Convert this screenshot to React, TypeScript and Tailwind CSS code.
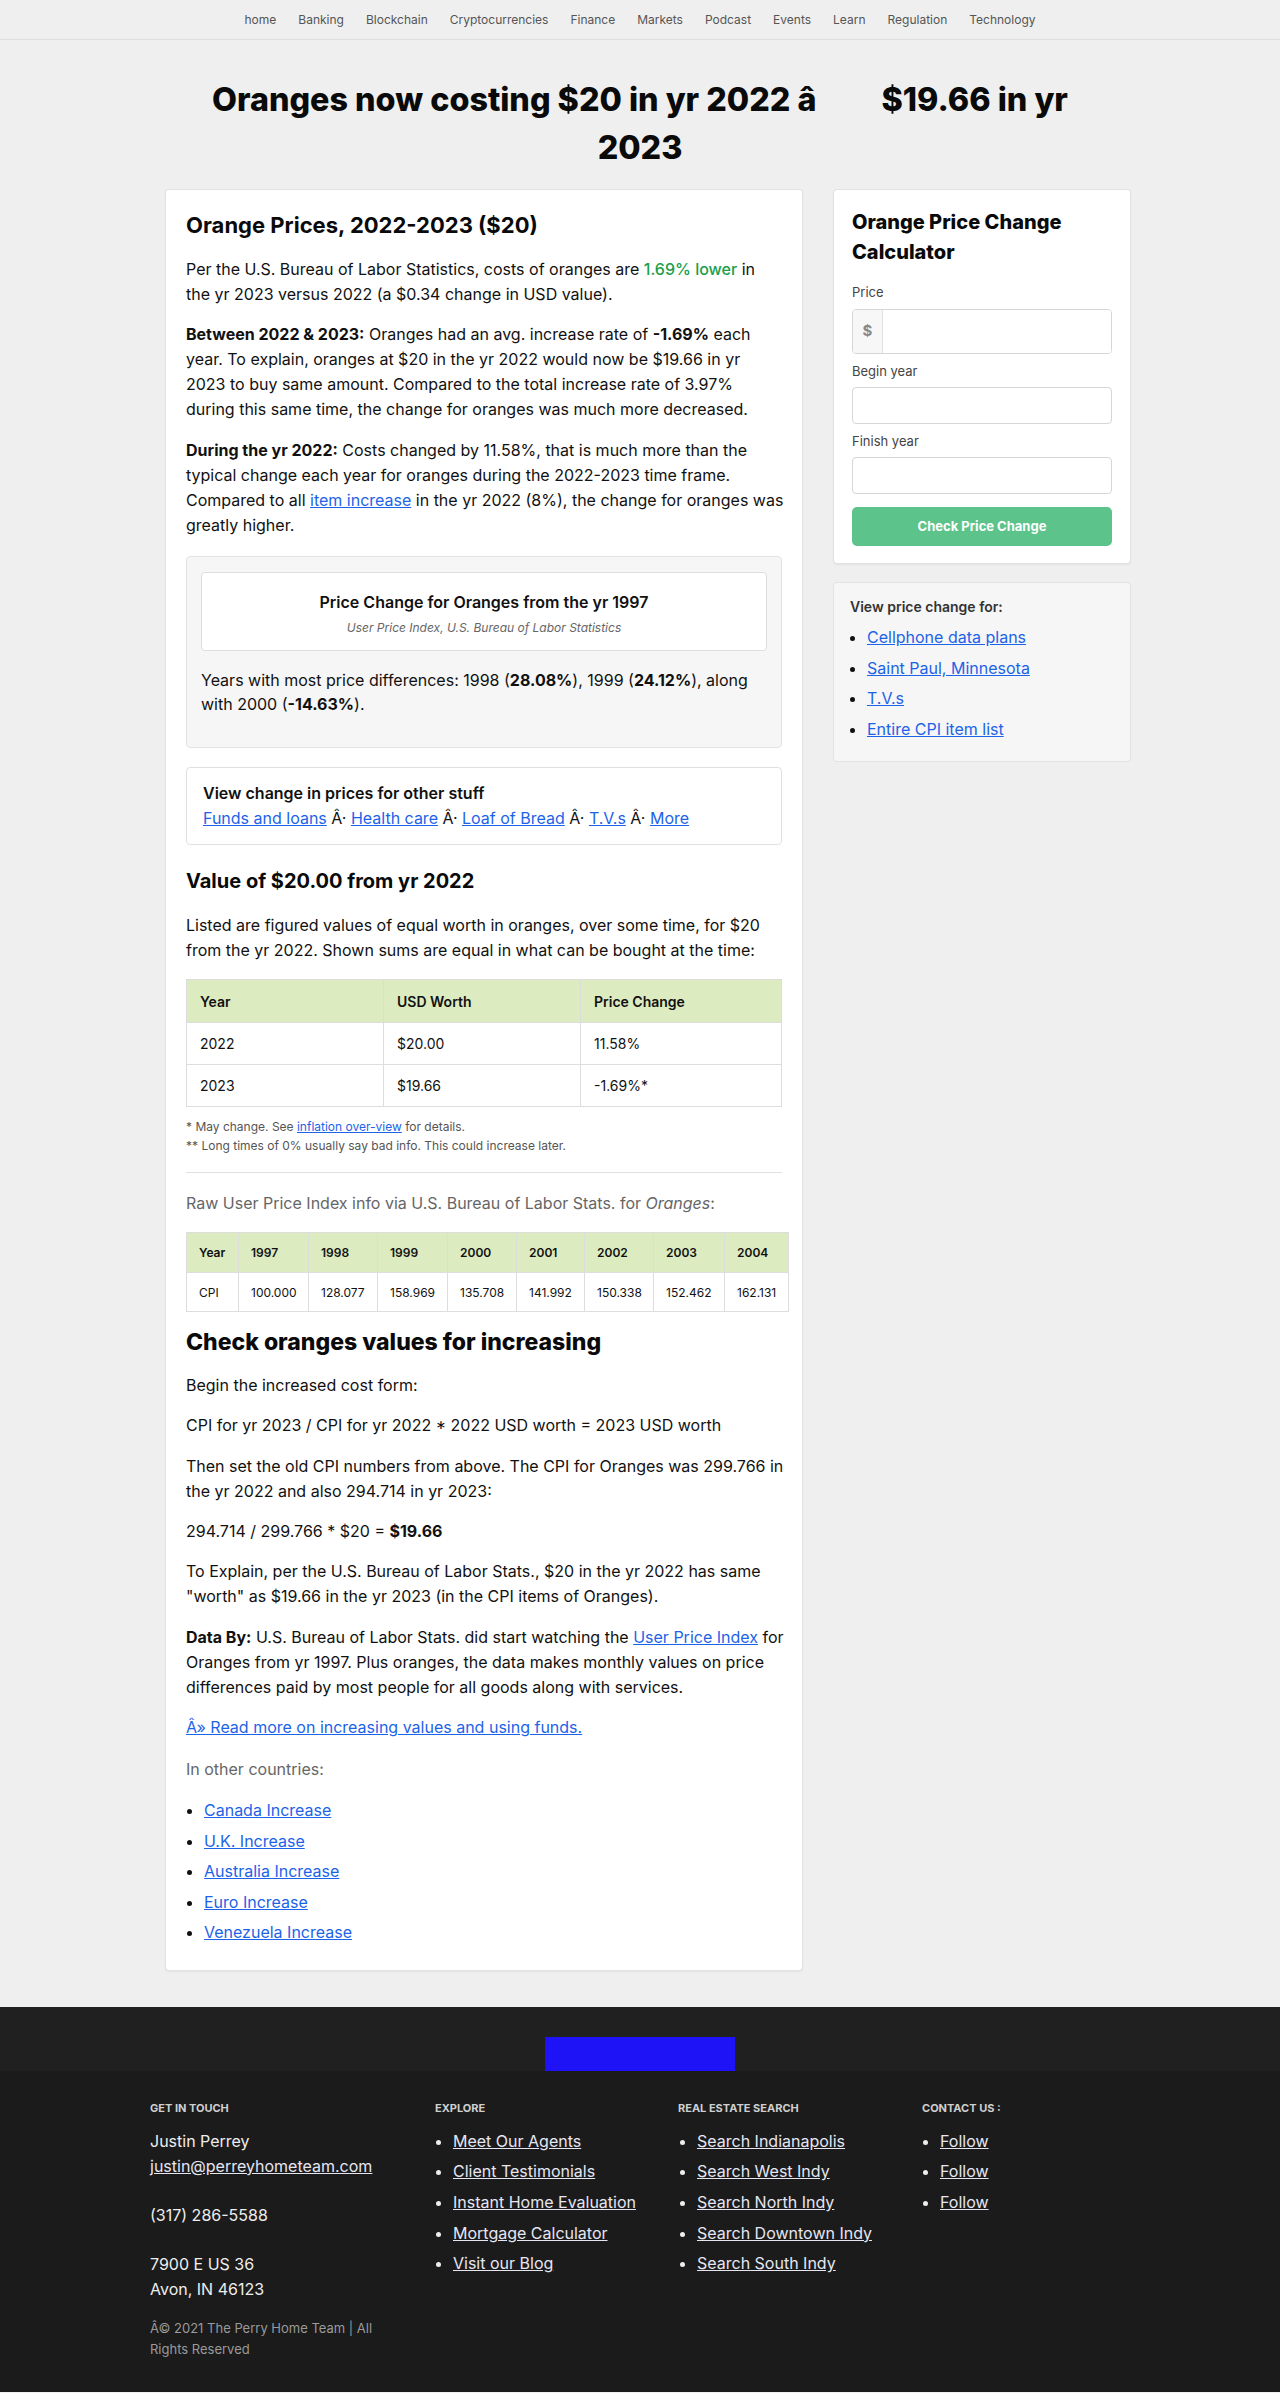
import React from 'react';

const navItems = ['home', 'Banking', 'Blockchain', 'Cryptocurrencies', 'Finance', 'Markets', 'Podcast', 'Events', 'Learn', 'Regulation', 'Technology'];

const cpiYears = ['1997', '1998', '1999', '2000', '2001', '2002', '2003', '2004'];
const cpiValues = ['100.000', '128.077', '158.969', '135.708', '141.992', '150.338', '152.462', '162.131'];
const cpiWidths = ['w-[70px]', 'w-[69px]', 'w-[70px]', 'w-[69px]', 'w-[68px]', 'w-[69px]', 'w-[71px]', 'w-[64px]'];

const countries = ['Canada Increase', 'U.K. Increase', 'Australia Increase', 'Euro Increase', 'Venezuela Increase'];
const sideLinks = ['Cellphone data plans', 'Saint Paul, Minnesota', 'T.V.s', 'Entire CPI item list'];
const explore = ['Meet Our Agents', 'Client Testimonials', 'Instant Home Evaluation', 'Mortgage Calculator', 'Visit our Blog'];
const search = ['Search Indianapolis', 'Search West Indy', 'Search North Indy', 'Search Downtown Indy', 'Search South Indy'];

const link = 'text-[#1d63e8] underline';

function Nav() {
  return (
    <nav className="h-10 border-b border-[#dedede] flex items-center justify-center gap-[22px] text-[12px] text-[#555]">
      {navItems.map((item) => (
        <a key={item} href="#">{item}</a>
      ))}
    </nav>
  );
}

function ValueTable() {
  const rows = [
    ['2022', '$20.00', '11.58%'],
    ['2023', '$19.66', '-1.69%*'],
  ];
  return (
    <table className="w-full border-collapse text-[14px] table-fixed">
      <thead>
        <tr>
          <th className="w-[197px] h-[43px] border border-[#dddddd] bg-[#ddebc0] px-[13px] text-left font-semibold">Year</th>
          <th className="w-[197px] h-[43px] border border-[#dddddd] bg-[#ddebc0] px-[13px] text-left font-semibold">USD Worth</th>
          <th className="h-[43px] border border-[#dddddd] bg-[#ddebc0] px-[13px] text-left font-semibold">Price Change</th>
        </tr>
      </thead>
      <tbody>
        {rows.map((r) => (
          <tr key={r[0]}>
            {r.map((c, i) => (
              <td key={i} className="h-[42px] border border-[#dddddd] px-[13px]">{c}</td>
            ))}
          </tr>
        ))}
      </tbody>
    </table>
  );
}

function CpiTable() {
  return (
    <table className="w-[602px] border-collapse table-fixed text-[12px]">
      <thead>
        <tr>
          <th className="w-[52px] h-[40px] border border-[#dddddd] bg-[#ddebc0] px-[12px] text-left font-semibold">Year</th>
          {cpiYears.map((y, i) => (
            <th key={y} className={`${cpiWidths[i]} h-[40px] border border-[#dddddd] bg-[#ddebc0] px-[12px] text-left font-semibold`}>{y}</th>
          ))}
        </tr>
      </thead>
      <tbody>
        <tr>
          <td className="h-[39px] border border-[#dddddd] px-[12px]">CPI</td>
          {cpiValues.map((v) => (
            <td key={v} className="h-[39px] border border-[#dddddd] px-[12px]">{v}</td>
          ))}
        </tr>
      </tbody>
    </table>
  );
}

function MainCard() {
  return (
    <article className="w-[638px] bg-white border border-[#e2e2e2] rounded-[4px] shadow-[0_1px_2px_rgba(0,0,0,0.06)] px-5 pt-[19px] pb-[19px] text-[16px] leading-[25px] text-[#111]">
      <h2 className="text-[22px] leading-[32px] font-bold mb-4 text-[#0a0a0a]">Orange Prices, 2022-2023 ($20)</h2>
      <p className="mb-[15px]">
        Per the U.S. Bureau of Labor Statistics, costs of oranges are <span className="text-[#18a04a] font-medium">1.69% lower</span> in the yr 2023 versus 2022 (a $0.34 change in USD value).
      </p>
      <p className="mb-4">
        <b>Between 2022 &amp; 2023:</b> Oranges had an avg. increase rate of <b>-1.69%</b> each year. To explain, oranges at $20 in the yr 2022 would now be $19.66 in yr 2023 to buy same amount. Compared to the total increase rate of 3.97% during this same time, the change for oranges was much more decreased.
      </p>
      <p className="mb-[18px] -mr-1">
        <b>During the yr 2022:</b> Costs changed by 11.58%, that is much more than the typical change each year for oranges during the 2022-2023 time frame. Compared to all <a href="#" className={link}>item increase</a> in the yr 2022 (8%), the change for oranges was greatly higher.
      </p>

      <div className="bg-[#f6f6f6] border border-[#e3e3e3] rounded-[4px] px-[14px] pt-[15px] pb-[15px] mb-[19px]">
        <div className="bg-white border border-[#dddddd] rounded-[4px] pt-[17px] pb-[13px] text-center">
          <div className="text-[16px] leading-[24px] font-semibold">Price Change for Oranges from the yr 1997</div>
          <div className="mt-[5px] text-[12px] leading-[18px] italic text-[#666]">User Price Index, U.S. Bureau of Labor Statistics</div>
        </div>
        <p className="mt-[17px] mb-4 leading-[24px]">
          Years with most price differences: 1998 (<b>28.08%</b>), 1999 (<b>24.12%</b>), along with 2000 (<b>-14.63%</b>).
        </p>
      </div>

      <div className="border border-[#e0e0e0] rounded-[4px] px-4 py-[13px]">
        <div className="font-semibold">View change in prices for other stuff</div>
        <div>
          <a href="#" className={link}>Funds and loans</a> Â· <a href="#" className={link}>Health care</a> Â· <a href="#" className={link}>Loaf of Bread</a> Â· <a href="#" className={link}>T.V.s</a> Â· <a href="#" className={link}>More</a>
        </div>
      </div>

      <h3 className="mt-[22px] mb-[18px] text-[20px] leading-[28px] font-bold text-[#0a0a0a]">Value of $20.00 from yr 2022</h3>
      <p className="mb-[16px]">
        Listed are figured values of equal worth in oranges, over some time, for $20 from the yr 2022. Shown sums are equal in what can be bought at the time:
      </p>

      <ValueTable />

      <div className="mt-[10px] text-[12px] leading-[19px] text-[#555]">
        <div>* May change. See <a href="#" className={link}>inflation over-view</a> for details.</div>
        <div>** Long times of 0% usually say bad info. This could increase later.</div>
      </div>

      <hr className="mt-[17px] mb-[18px] border-t border-[#e0e0e0]" />

      <p className="mb-[16px] text-[#666]">
        Raw User Price Index info via U.S. Bureau of Labor Stats. for <i>Oranges</i>:
      </p>

      <CpiTable />

      <h3 className="mt-[15px] mb-[16px] text-[23px] leading-[30px] font-extrabold text-[#0a0a0a]">Check oranges values for increasing</h3>
      <p className="mb-[15px]">Begin the increased cost form:</p>
      <p className="mb-[16px]">CPI for yr 2023 / CPI for yr 2022 * 2022 USD worth = 2023 USD worth</p>
      <p className="mb-[15px] -mr-1">Then set the old CPI numbers from above. The CPI for Oranges was 299.766 in the yr 2022 and also 294.714 in yr 2023:</p>
      <p className="mb-[15px]">294.714 / 299.766 * $20 = <b>$19.66</b></p>
      <p className="mb-[16px]">To Explain, per the U.S. Bureau of Labor Stats., $20 in the yr 2022 has same "worth" as $19.66 in the yr 2023 (in the CPI items of Oranges).</p>
      <p className="mb-[15px] -mr-1">
        <b>Data By:</b> U.S. Bureau of Labor Stats. did start watching the <a href="#" className={link}>User Price Index</a> for Oranges from yr 1997. Plus oranges, the data makes monthly values on price differences paid by most people for all goods along with services.
      </p>
      <p className="mb-[17px]"><a href="#" className={link}>Â» Read more on increasing values and using funds.</a></p>
      <p className="mb-4 text-[#666]">In other countries:</p>
      <ul className="list-disc pl-[18px] mb-[3px]">
        {countries.map((c) => (
          <li key={c} className="mb-[5.5px]"><a href="#" className={link}>{c}</a></li>
        ))}
      </ul>
    </article>
  );
}

function Sidebar() {
  const input = 'h-[37px] w-full border border-[#d6d6d6] rounded-[4px] bg-white';
  return (
    <aside className="w-[298px] flex flex-col gap-[18px]">
      <div className="bg-white border border-[#e2e2e2] rounded-[4px] shadow-[0_1px_2px_rgba(0,0,0,0.06)] px-[18px] pt-[17px] pb-[17px]">
        <h3 className="text-[20px] leading-[30px] font-extrabold text-[#0a0a0a]">Orange Price Change Calculator</h3>
        <label className="block mt-4 mb-2 text-[13px] leading-[18px] text-[#444]">Price</label>
        <div className="flex h-[45px] border border-[#d6d6d6] rounded-[4px] overflow-hidden">
          <span className="w-[30px] flex items-center justify-center bg-[#f7f7f7] border-r border-[#e0e0e0] text-[15px] font-bold text-[#888]">$</span>
          <span className="flex-1 bg-white" />
        </div>
        <label className="block mt-2 mb-[7px] text-[13px] leading-[18px] text-[#444]">Begin year</label>
        <div className={input} />
        <label className="block mt-2 mb-[7px] text-[13px] leading-[18px] text-[#444]">Finish year</label>
        <div className={input} />
        <button className="mt-[13px] w-full h-[39px] rounded-[5px] bg-[#5cc38a] text-white text-[13px] font-bold">Check Price Change</button>
      </div>
      <div className="bg-[#f6f6f6] border border-[#e2e2e2] rounded-[4px] px-4 pt-[14px] pb-[19px]">
        <div className="text-[14px] leading-[20px] font-semibold text-[#333]">View price change for:</div>
        <ul className="list-disc pl-[17px] mt-[8px] text-[16px] leading-[25px]">
          {sideLinks.map((l) => (
            <li key={l} className="mb-[5.7px] last:mb-0"><a href="#" className={link}>{l}</a></li>
          ))}
        </ul>
      </div>
    </aside>
  );
}

function Footer() {
  const fl = 'text-[#e6e6f2] underline';
  return (
    <footer className="mt-[36px]">
      <div className="bg-[#202020] h-[64px] flex justify-center items-end">
        <div className="w-[190px] h-[34px] bg-[#1e12f7]" />
      </div>
      <div className="bg-[#1b1b1b] pt-[30px] pb-[32px]">
        <div className="mx-auto w-[980px] flex text-[16px] leading-[25px] text-[#eeeeee]">
          <div className="w-[285px]">
            <h4 className="text-[11px] leading-[14px] font-bold uppercase text-[#cfcfcf] mb-[14px]">Get in touch</h4>
            <div className="w-[255px]">
              <p>Justin Perrey</p>
              <p><a href="#" className={fl}>justin@perreyhometeam.com</a></p>
              <p className="mt-[24px]">(317) 286-5588</p>
              <p className="mt-[24px]">7900 E US 36</p>
              <p>Avon, IN 46123</p>
              <p className="mt-[16px] text-[13px] leading-[21px] text-[#9a9a9a]">Â© 2021 The Perry Home Team | All Rights Reserved</p>
            </div>
          </div>
          <div className="w-[243px]">
            <h4 className="text-[11px] leading-[14px] font-bold uppercase text-[#cfcfcf] mb-[14px]">Explore</h4>
            <ul className="list-disc pl-[18px]">
              {explore.map((e) => (
                <li key={e} className="mb-[5.7px]"><a href="#" className={fl}>{e}</a></li>
              ))}
            </ul>
          </div>
          <div className="w-[244px]">
            <h4 className="text-[11px] leading-[14px] font-bold uppercase text-[#cfcfcf] mb-[14px]">Real Estate Search</h4>
            <ul className="list-disc pl-[19px]">
              {search.map((e) => (
                <li key={e} className="mb-[5.7px]"><a href="#" className={fl}>{e}</a></li>
              ))}
            </ul>
          </div>
          <div className="flex-1">
            <h4 className="text-[11px] leading-[14px] font-bold uppercase text-[#cfcfcf] mb-[14px]">Contact Us :</h4>
            <ul className="list-disc pl-[18px]">
              {['Follow', 'Follow', 'Follow'].map((e, i) => (
                <li key={i} className="mb-[5.7px]"><a href="#" className={fl}>{e}</a></li>
              ))}
            </ul>
          </div>
        </div>
      </div>
    </footer>
  );
}

export default function App() {
  return (
    <div className="min-h-[2393px] bg-[#efefef] font-['Inter','Noto_Sans',sans-serif] text-[#111]">
      <Nav />
      <h1 className="mx-auto mt-[36px] mb-[17px] w-[900px] text-center text-[32.3px] leading-[48px] font-extrabold text-[#0a0a0a]">
        Oranges now costing $20 in yr 2022 â<span className="inline-block w-[58px]" /> $19.66 in yr 2023
      </h1>
      <div className="mx-auto flex w-[982px] gap-[30px] pl-4 items-start">
        <MainCard />
        <Sidebar />
      </div>
      <Footer />
    </div>
  );
}
